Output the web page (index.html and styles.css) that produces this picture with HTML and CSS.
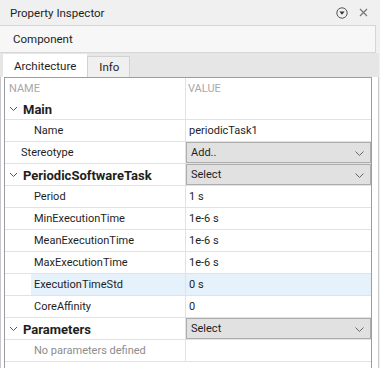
FILE: index.html
```html
<!DOCTYPE html>
<html lang="en">
<head>
  <meta charset="UTF-8">
  <title>Property Inspector</title>
  <link rel="stylesheet" href="styles.css">
</head>
<body>
  <div class="titlebar">
    <span class="title">Property Inspector</span>
    <span class="title-icons">
      <svg width="12" height="12" viewBox="0 0 12 12"><circle cx="6" cy="6" r="5.2" fill="none" stroke="#555" stroke-width="1"/><path d="M3.4 4.6 H8.6 L6 7.8 Z" fill="#333"/></svg>
      <svg width="9" height="9" viewBox="0 0 9 9"><path d="M1 1 L8 8 M8 1 L1 8" stroke="#777" stroke-width="1.2"/></svg>
    </span>
  </div>

  <div class="component">Component</div>

  <div class="tabs">
    <div class="tab active">Architecture</div>
    <div class="tab">Info</div>
  </div>

  <div class="panel">
    <div class="table">
      <div class="row head">
        <div class="cell name">NAME</div>
        <div class="cell value">VALUE</div>
      </div>

      <!-- Main -->
      <div class="row group">
        <div class="cell name"><span class="chev"><svg width="9" height="6" viewBox="0 0 9 6"><path d="M1 1 L4.5 4.5 L8 1" fill="none" stroke="#555" stroke-width="1"/></svg></span>Main</div>
        <div class="cell value blank"></div>
      </div>
      <div class="row child">
        <div class="cell name">Name</div>
        <div class="cell value">periodicTask1</div>
      </div>
      <div class="row top">
        <div class="cell name">Stereotype</div>
        <div class="cell value"><div class="select">Add..<svg class="arrow" width="9" height="5" viewBox="0 0 9 5"><path d="M0.5 0.5 L4.5 4.5 L8.5 0.5" fill="none" stroke="#666" stroke-width="1"/></svg></div></div>
      </div>

      <!-- PeriodicSoftwareTask -->
      <div class="row group">
        <div class="cell name"><span class="chev"><svg width="9" height="6" viewBox="0 0 9 6"><path d="M1 1 L4.5 4.5 L8 1" fill="none" stroke="#555" stroke-width="1"/></svg></span>PeriodicSoftwareTask</div>
        <div class="cell value"><div class="select">Select<svg class="arrow" width="9" height="5" viewBox="0 0 9 5"><path d="M0.5 0.5 L4.5 4.5 L8.5 0.5" fill="none" stroke="#666" stroke-width="1"/></svg></div></div>
      </div>
      <div class="row child">
        <div class="cell name">Period</div>
        <div class="cell value">1 s</div>
      </div>
      <div class="row child">
        <div class="cell name">MinExecutionTime</div>
        <div class="cell value">1e-6 s</div>
      </div>
      <div class="row child">
        <div class="cell name">MeanExecutionTime</div>
        <div class="cell value">1e-6 s</div>
      </div>
      <div class="row child">
        <div class="cell name">MaxExecutionTime</div>
        <div class="cell value">1e-6 s</div>
      </div>
      <div class="row child selected">
        <div class="cell name">ExecutionTimeStd</div>
        <div class="cell value">0 s</div>
      </div>
      <div class="row child">
        <div class="cell name">CoreAffinity</div>
        <div class="cell value">0</div>
      </div>

      <!-- Parameters -->
      <div class="row group">
        <div class="cell name"><span class="chev"><svg width="9" height="6" viewBox="0 0 9 6"><path d="M1 1 L4.5 4.5 L8 1" fill="none" stroke="#555" stroke-width="1"/></svg></span>Parameters</div>
        <div class="cell value"><div class="select">Select<svg class="arrow" width="9" height="5" viewBox="0 0 9 5"><path d="M0.5 0.5 L4.5 4.5 L8.5 0.5" fill="none" stroke="#666" stroke-width="1"/></svg></div></div>
      </div>
      <div class="row child empty">
        <div class="cell name">No parameters defined</div>
        <div class="cell value"></div>
      </div>
    </div>
  </div>
</body>
</html>
```

FILE: styles.css
```css
body {
  margin: 0;
  background: #f0f0f0;
  font-family: Roboto, "Liberation Sans", sans-serif;
  font-size: 11px;
  color: #1e1e1e;
  width: 380px;
  height: 368px;
  overflow: hidden;
}

.titlebar {
  height: 25px;
  display: flex;
  align-items: center;
  justify-content: space-between;
  padding: 0 12px 0 10px;
}

.title {
  font-size: 11.5px;
}

.title-icons {
  display: flex;
  align-items: center;
  gap: 11px;
}

.title-icons svg {
  display: block;
}

.component {
  width: 362px;
  height: 26px;
  line-height: 26px;
  padding-left: 13px;
  background: #f7f7f7;
  border: 1px solid #d6d6d6;
  border-left: none;
  font-size: 11.5px;
}

.tabs {
  height: 24px;
  display: flex;
  align-items: flex-end;
  padding-left: 3px;
  background: #e6e6e6;
  width: 376px;
}

.tab {
  height: 20px;
  line-height: 21px;
  padding: 0 10px 0 11px;
  background: #f0f0f0;
  border: 1px solid #d2d2d2;
  border-bottom: none;
  font-size: 11.5px;
}

.tab.active {
  height: 22px;
  line-height: 22px;
  background: #fff;
  border-color: #fff;
  padding: 0 10px 0 10px;
}

.panel {
  width: 373px;
  height: 291px;
  background: #fff;
  border-left: 1px solid #c8c8c8;
  border-right: 1px solid #c8c8c8;
  padding: 0 2px 0 2px;
}

.table {
  border: 1px solid #9c9ca8;
  border-bottom: none;
  margin-left: 1px;
  width: 366px;
  height: 290px;
}

.row {
  display: grid;
  grid-template-columns: 181px 1fr;
  height: 22px;
  border-bottom: 1px solid #e2e2e2;
  box-sizing: border-box;
}

.cell {
  display: flex;
  align-items: center;
  overflow: hidden;
  white-space: nowrap;
}

.cell.name {
  border-right: 1px solid #e2e2e2;
  padding-left: 16px;
}

.row.head {
  height: 20px;
  border-bottom: none;
  color: #a8a8a8;
}

.row.head .cell.name {
  padding-left: 4px;
}

.row.head .cell.value {
  padding-left: 2px;
}

.row.group .cell.name {
  padding-left: 2px;
  padding-top: 2px;
  font-weight: bold;
  font-size: 13px;
}

.chev {
  display: inline-flex;
  width: 14px;
  padding-left: 2px;
  margin-top: -1px;
}

.row.child .cell.name {
  padding-left: 29px;
}

.row.child .cell.value {
  padding-left: 3px;
}

.row.group .cell.value,
.row.top .cell.value {
  padding: 0;
  align-items: stretch;
}

.row.selected {
  background: linear-gradient(to right, #fff 26px, #e5f1fb 26px);
}

.row.empty .cell.name {
  color: #8c8c8c;
}

.select {
  flex: 1;
  position: relative;
  background: #e1e1e1;
  border: 1px solid #adadad;
  display: flex;
  align-items: center;
  padding-left: 4px;
}

.arrow {
  position: absolute;
  right: 6px;
  top: 8px;
}
```
